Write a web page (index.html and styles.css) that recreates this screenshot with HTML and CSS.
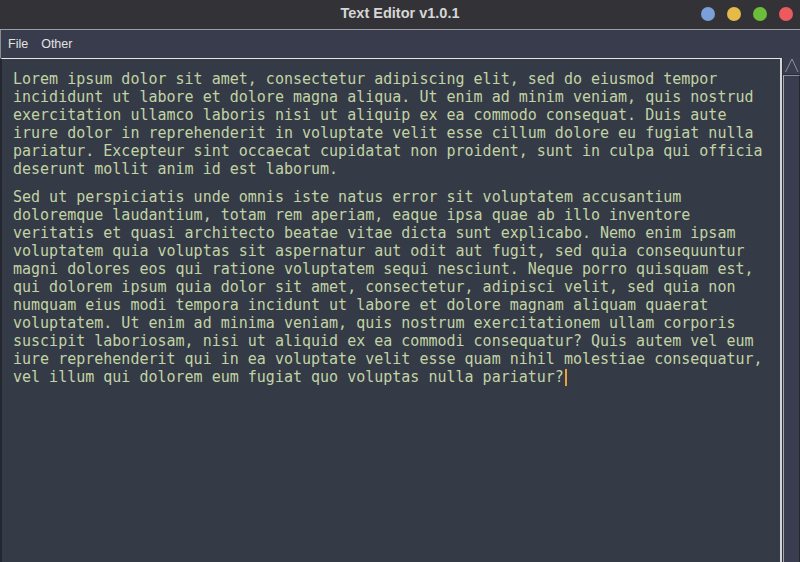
FILE: index.html
```html
<!DOCTYPE html>
<html>
<head>
<meta charset="utf-8">
<link rel="stylesheet" href="styles.css">
</head>
<body>
<div class="app">
  <div class="titlebar">
    <div class="tb-left"></div>
    <div class="title">Text Editor v1.0.1</div>
    <div class="dots">
      <span class="dot dot-blue"></span>
      <span class="dot dot-yellow"></span>
      <span class="dot dot-green"></span>
      <span class="dot dot-red"></span>
    </div>
  </div>
  <div class="menubar">
    <span class="menu-item">File</span>
    <span class="menu-item">Other</span>
  </div>
  <div class="body-row">
    <div class="editor">
      <p class="para">Lorem ipsum dolor sit amet, consectetur adipiscing elit, sed do eiusmod tempor incididunt ut labore et dolore magna aliqua. Ut enim ad minim veniam, quis nostrud exercitation ullamco laboris nisi ut aliquip ex ea commodo consequat. Duis aute irure dolor in reprehenderit in voluptate velit esse cillum dolore eu fugiat nulla pariatur. Excepteur sint occaecat cupidatat non proident, sunt in culpa qui officia deserunt mollit anim id est laborum.</p>
      <p class="para">Sed ut perspiciatis unde omnis iste natus error sit voluptatem accusantium doloremque laudantium, totam rem aperiam, eaque ipsa quae ab illo inventore veritatis et quasi architecto beatae vitae dicta sunt explicabo. Nemo enim ipsam voluptatem quia voluptas sit aspernatur aut odit aut fugit, sed quia consequuntur magni dolores eos qui ratione voluptatem sequi nesciunt. Neque porro quisquam est, qui dolorem ipsum quia dolor sit amet, consectetur, adipisci velit, sed quia non numquam eius modi tempora incidunt ut labore et dolore magnam aliquam quaerat voluptatem. Ut enim ad minima veniam, quis nostrum exercitationem ullam corporis suscipit laboriosam, nisi ut aliquid ex ea commodi consequatur? Quis autem vel eum iure reprehenderit qui in ea voluptate velit esse quam nihil molestiae consequatur, vel illum qui dolorem eum fugiat quo voluptas nulla pariatur?<span class="caret"></span></p>
    </div>
    <div class="scrollbar">
      <div class="sb-up">
        <svg width="15" height="15" viewBox="0 0 15 15"><path d="M1.5 14 L8 1 L14 14" fill="none" stroke="#8e9098" stroke-width="1"/></svg>
      </div>
      <div class="sb-thumb"></div>
    </div>
  </div>
</div>
</body>
</html>
```
FILE: styles.css
```css
html, body {
  margin: 0;
  padding: 0;
  background: #353b46;
}
.app {
  width: 800px;
  height: 562px;
  display: flex;
  flex-direction: column;
  overflow: hidden;
}
.titlebar {
  height: 29px;
  flex: none;
  background: #333337;
  border-bottom: 1px solid #9c9ca4;
  display: grid;
  grid-template-columns: 1fr auto 1fr;
  align-items: center;
}
.title {
  font-family: "Liberation Sans", Arial, sans-serif;
  font-weight: bold;
  font-size: 14.5px;
  color: #d6d6d6;
  margin-top: -4px;
}
.dots {
  justify-self: end;
  display: flex;
  gap: 12px;
  padding-right: 7px;
  margin-top: -1px;
}
.dot {
  width: 14px;
  height: 14px;
  border-radius: 50%;
  display: block;
}
.dot-blue { background: #7b9fd8; }
.dot-yellow { background: #e5ba47; }
.dot-green { background: #6cbd3a; }
.dot-red { background: #eb5b5e; }
.menubar {
  height: 28px;
  flex: none;
  background: #393c4d;
  border-left: 1px solid #8a8c94;
  display: flex;
  align-items: center;
  gap: 13px;
  padding-left: 7px;
  font-family: "Liberation Sans", Arial, sans-serif;
  font-size: 12.5px;
  color: #e2e2e2;
}
.body-row {
  flex: 1;
  display: flex;
  min-height: 0;
}
.editor {
  flex: 1;
  background: #353b46;
  border-top: 1px solid #e4e4e4;
  border-right: 2px solid #d4d4d8;
  border-left: 2px solid #24272f;
  padding: 11px 11px 10px;
  font-family: "DejaVu Sans Mono", monospace;
  font-size: 15px;
  line-height: 18px;
  color: #c2d3a5;
}
.para {
  margin: 0 0 10px 0;
  width: 83.5ch;
}
.caret {
  display: inline-block;
  width: 2px;
  height: 17px;
  background: #e8a23c;
  vertical-align: -4px;
  margin-left: 1px;
}
.scrollbar {
  width: 17px;
  flex: none;
  background: #2c2e37;
  display: flex;
  flex-direction: column;
  padding-left: 1px;
}
.sb-up {
  height: 16px;
  display: flex;
  justify-content: center;
  align-items: flex-start;
  background: #3a3d4f;
}
.sb-thumb {
  flex: 1;
  margin-top: 1px;
  background: #3a3d4f;
  border-left: 1px solid #a8a8b0;
  border-top: 1px solid #8a8c94;
  border-right: 1px solid #24262e;
}
```
